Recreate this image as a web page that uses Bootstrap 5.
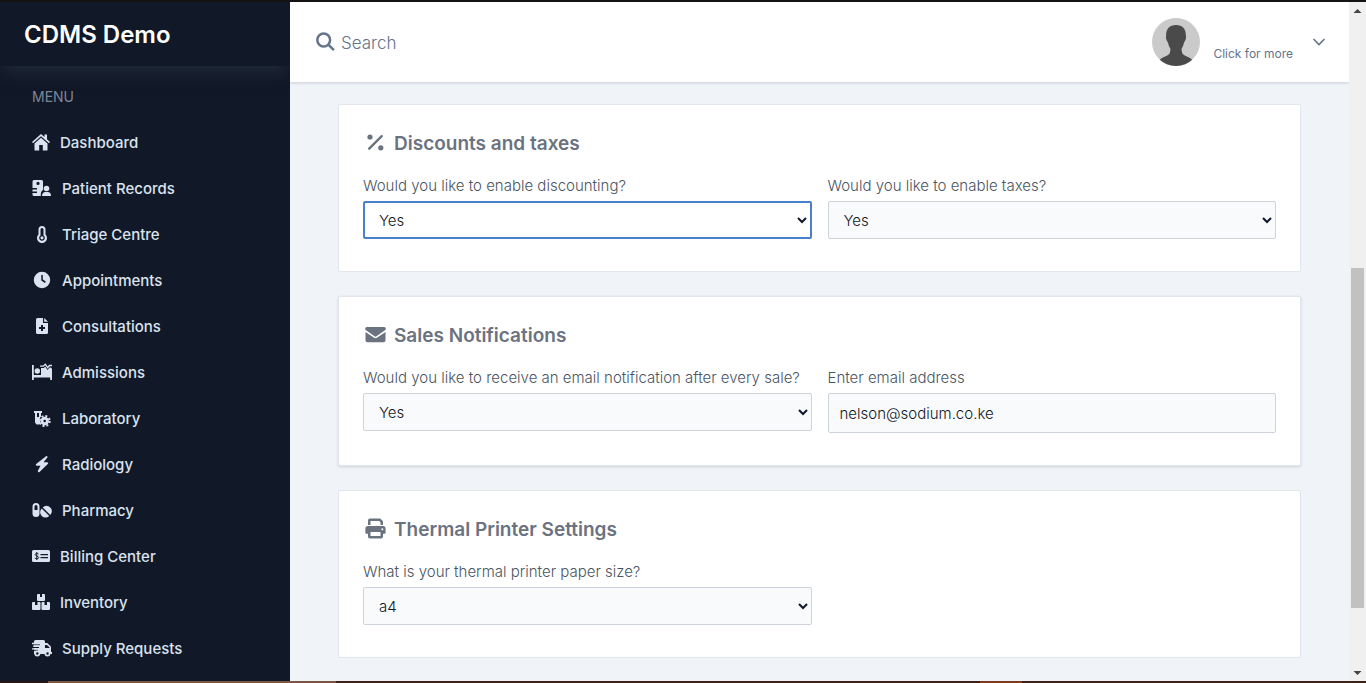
<!DOCTYPE html>
<html lang="en">
<head>
<meta charset="utf-8">
<meta name="viewport" content="width=device-width, initial-scale=1">
<title>CDMS Demo - Settings</title>
<link href="https://cdn.jsdelivr.net/npm/bootstrap@5.3.0/dist/css/bootstrap.min.css" rel="stylesheet">
<style>
  body { font-family: Inter, "Liberation Sans", sans-serif; font-size: 15px; line-height: 24px; color: #4b5563; background: #f0f3f8; }
  .app-shell { border-top: 2px solid #151214; }
  .sidebar { width: 290px; background: #111827; }
  .brand-bar { height: 64px; padding: 2px 0 0 24px; font-size: 24px; font-weight: 600; box-shadow: 0 10px 15px -3px #1f2937; position: relative; }
  .menu-title { font-size: 14px; line-height: 20px; color: #7b8799; margin: 21px 0 13px 32px; }
  .side-link { height: 46px; padding-left: 32px; gap: 10px; color: #dbe3f0; font-weight: 500; text-decoration: none; }
  .side-link:hover { color: #fff; }
  .side-link svg { width: 20px; height: 18px; fill: currentColor; flex: none; margin-bottom: 2px; }
  .side-link.narrow svg { width: 18px; }
  .topbar { height: 80px; padding: 0 23px 0 26px; background: #fff; box-shadow: 0 1px 3px rgba(0, 0, 0, .16); position: relative; color: #64748b; }
  .search-input { border: 0; outline: 0; font-size: 17px; font-weight: 300; color: #64748b; background: transparent; padding: 2px 0 0 5px; }
  .search-input::placeholder { color: #64748b; }
  .user-menu { border: 0; background: transparent; color: #64748b; font-size: 12px; padding: 0; }
  .user-menu .more-text { padding-top: 24px; margin-left: 13px; margin-right: 19px; }
  .content { padding: 22px 48px 0; gap: 24px; }
  .panel { background: #fff; border: 1px solid #e1e6ec; border-radius: 2px; padding: 25px 24px 32px; }
  .panel.raised { box-shadow: 0 1px 3px rgba(0, 0, 0, .14); }
  .panel-title { color: #6b7280; font-size: 19px; line-height: 28px; font-weight: 600; margin: 0 0 16px; padding-left: 2px; gap: 8px; }
  .panel-title svg { width: 21px; height: 21px; fill: currentColor; margin-bottom: 3px; }
  .panel label { font-weight: 300; margin-bottom: 3px; display: block; white-space: nowrap; }
  .field { display: block; width: 100%; height: 38px; border: 1px solid #cfd4dc; border-radius: 2px; background: #f9fafb; color: #111827; font-weight: 300; padding: 0 11px; outline: 0; }
  input.field { height: 40px; }
  .field.active-field { background: #fff; border: 2px solid #4a80cf; padding: 0 10px; }
  .scroll-rail { width: 17px; background: #f0f0f0; flex: none; }
  .scroll-rail svg { width: 17px; height: 17px; fill: #454545; display: block; }
  .scroll-thumb { background: #c1c1c1; margin: 0 2px; }
  .bottom-edge { height: 2px; background: linear-gradient(90deg, #2a1414 48px, #7a5644 48px, #7a5644 336px, #3d2117 336px, #3d2117 980px, #7d3c22 980px, #7d3c22 1022px, #3d2117 1022px); }
</style>
</head>
<body>
<div class="vh-100 d-flex flex-column overflow-hidden">
<div class="app-shell d-flex flex-fill overflow-hidden">
  <nav class="sidebar flex-shrink-0 overflow-hidden" aria-label="Main menu">
    <div class="brand-bar d-flex align-items-center text-white">CDMS Demo</div>
    <div class="menu-title">MENU</div>
    <a class="side-link narrow d-flex align-items-center" href="#"><svg viewBox="0 0 18 18"><path d="M9 1 0 9l1 1.200 8-7 8 7L18 9l-3-2.700V1.500h-2.500v2.500zM9 4.800 2.500 10.500V17.500h4.700v-5.500h3.600v5.500h4.700v-7z"/></svg>Dashboard</a>
    <a class="side-link d-flex align-items-center" href="#"><svg viewBox="0 0 20 18"><path fill-rule="evenodd" d="M2 1h7.500a1.500 1.500 0 0 1 1.500 1.500V11c-1.500 1-2.200 2.500-2.200 4v2H2a1.500 1.500 0 0 1-1.500-1.500v-1.500H5V12.500H.500v-2H5V9H.500V2.500A1.500 1.500 0 0 1 2 1zm4 1.800a1.600 1.600 0 1 0 0 3.200 1.600 1.600 0 0 0 0-3.200z"/><circle cx="14.500" cy="9.500" r="2.800"/><path d="M10 17c0-2.500 1.500-4 3.300-4h2.400c2 0 3.300 1.500 3.300 4z"/></svg>Patient Records</a>
    <a class="side-link d-flex align-items-center" href="#"><svg viewBox="0 0 20 18"><path fill-rule="evenodd" d="M10 1a3.500 3.500 0 0 1 3.500 3.500v5a5 5 0 1 1-7 0v-5A3.500 3.500 0 0 1 10 1zm0 2a1.500 1.500 0 0 0-1.500 1.500v6a2.800 2.800 0 1 0 3 0v-6A1.500 1.500 0 0 0 10 3z"/><circle cx="10" cy="12.800" r="1.600"/></svg>Triage Centre</a>
    <a class="side-link d-flex align-items-center" href="#"><svg viewBox="0 0 20 18"><path fill-rule="evenodd" d="M10 .800a8.200 8.200 0 1 0 0 16.400A8.200 8.200 0 0 0 10 .800zM9.300 4h1.500v4.600l3 2-.9 1.300-3.600-2.500z"/></svg>Appointments</a>
    <a class="side-link d-flex align-items-center" href="#"><svg viewBox="0 0 20 18"><path fill-rule="evenodd" d="M5.500 1H11v5h5v9.500a1.500 1.500 0 0 1-1.500 1.500h-9A1.500 1.500 0 0 1 4 15.500v-13A1.500 1.500 0 0 1 5.500 1zM9 8v2H7v2h2v2h2v-2h2v-2h-2V8z"/><path d="M12.200 1 16 4.800h-3.800z"/></svg>Consultations</a>
    <a class="side-link d-flex align-items-center" href="#"><svg viewBox="0 0 20 18"><path d="M0 2h1.800v10H9V5h2.800l1.300-1.600L15.500 7l2-2.500h.700A2 2 0 0 1 20 6.500V17h-1.800v-2.500H1.800V17H0z"/><circle cx="5.300" cy="8" r="2.700"/><path fill="none" stroke="currentColor" stroke-width="1.300" d="M8 3.200h3.300l2-2 2.300 3.500 1.800-2.200H20"/></svg>Admissions</a>
    <a class="side-link d-flex align-items-center" href="#"><svg viewBox="0 0 20 18"><path fill-rule="evenodd" d="M2 2h8v2H9v3.500L7.700 9.200l.5 5.800-1.700.500A3.200 3.200 0 0 1 3 12.700V4H2zm3 2v4h2V4z"/><path fill="none" stroke="currentColor" stroke-width="2" stroke-dasharray="2 1.930" d="M17.700 12a5 5 0 1 1-10 0 5 5 0 0 1 10 0z"/><path fill-rule="evenodd" d="M12.700 7.700a4.300 4.300 0 1 0 0 8.600 4.300 4.300 0 0 0 0-8.600zm0 3a1.300 1.300 0 1 1 0 2.600 1.300 1.300 0 0 1 0-2.600z"/></svg>Laboratory</a>
    <a class="side-link d-flex align-items-center" href="#"><svg viewBox="0 0 20 18"><path d="M14 1.200 4.200 9a1 1 0 0 0 .6 1.800h3.700L6 15.600a1 1 0 0 0 1.500 1.300L15.800 9a1 1 0 0 0-.6-1.800h-3.700l3.900-4.700A1 1 0 0 0 14 1.200z"/></svg>Radiology</a>
    <a class="side-link d-flex align-items-center" href="#"><svg viewBox="0 0 20 18"><path fill-rule="evenodd" d="M4 2a3.500 3.500 0 0 1 3.500 3.500v7a3.500 3.500 0 0 1-7 0v-7A3.500 3.500 0 0 1 4 2zm0 2a1.500 1.500 0 0 0-1.500 1.500V9h3V5.500A1.500 1.500 0 0 0 4 4z"/><path d="m9.700 7.400 7.600 7.600A5 5 0 0 1 9.700 7.400zm1-1a5 5 0 0 1 7.600 7.600z"/></svg>Pharmacy</a>
    <a class="side-link narrow d-flex align-items-center" href="#"><svg viewBox="0 0 18 18"><path fill-rule="evenodd" d="M1.500 3h15A1.500 1.500 0 0 1 18 4.500v9a1.500 1.500 0 0 1-1.500 1.500h-15A1.500 1.500 0 0 1 0 13.500v-9A1.500 1.500 0 0 1 1.500 3zM8.500 7v1.200H16V7zm0 3v1.200H16V10z"/><path fill="none" stroke="#111827" d="M6.500 7C5.500 6 3.200 6.200 3.200 7.600S6.700 9 6.700 10.600 3.700 12 2.800 11M4.800 5v8"/></svg>Billing Center</a>
    <a class="side-link narrow d-flex align-items-center" href="#"><svg viewBox="0 0 18 18"><path d="M6 1h2v3h2V1h2a1 1 0 0 1 1 1v5a1 1 0 0 1-1 1H6a1 1 0 0 1-1-1V2a1 1 0 0 1 1-1zM1 9h2v3h2.500V9H7.500a1 1 0 0 1 1 1v6a1 1 0 0 1-1 1H1a1 1 0 0 1-1-1v-6a1 1 0 0 1 1-1zM10.500 9h2v3H15V9h2a1 1 0 0 1 1 1v6a1 1 0 0 1-1 1h-6.500a1 1 0 0 1-1-1v-6a1 1 0 0 1 1-1z"/></svg>Inventory</a>
    <a class="side-link d-flex align-items-center" href="#"><svg viewBox="0 0 20 18"><path d="M3.500 1h8A1.500 1.500 0 0 1 13 2.500V4h2.300L19 7.700V13h1v2H2V2.500A1.500 1.500 0 0 1 3.500 1z"/><path fill="#111827" d="M13 6v3h4.500v-.700L14.800 6zM0 5.200h8v1.100H0zM0 8h7v1.100H0zM0 10.700h6v1.100H0z"/><path d="M0 3.800h9v1.400H0zM1 6.400h7.500v1.400H1zM0 9.200h7v1.400H0z"/><g fill="#111827" stroke="currentColor" stroke-width="1.700"><circle cx="5.300" cy="14.500" r="2.100"/><circle cx="15.500" cy="14.500" r="2.100"/></g></svg>Supply Requests</a>
  </nav>

  <div class="flex-fill overflow-hidden">
    <header class="topbar d-flex align-items-center justify-content-between">
      <label class="d-flex align-items-center" aria-label="Search">
        <svg width="20" height="20" viewBox="0 0 20 20" fill="none" stroke="currentColor" stroke-width="2.500"><circle cx="7.700" cy="8" r="6.400"/><path d="m12.300 12.600 5.600 5.600"/></svg>
        <input class="search-input" type="search" placeholder="Search">
      </label>
      <button class="user-menu d-flex align-items-center" type="button">
        <svg width="48" height="48" viewBox="0 0 48 48"><defs><clipPath id="avatarClip"><circle cx="24" cy="24" r="24"/></clipPath></defs><g clip-path="url(#avatarClip)"><path fill="#cacaca" d="M0 0h48v48H0z"/><path fill="#4a4a4a" d="M24 7c6.500 0 10 4 9.800 10 .8 3-.3 6-1.800 7.500-.5 2.500-1.200 4.500-2.400 6 0 3 .4 5 2 6.200C34 38.500 38 39 40.500 42V48h-33v-6C10 39 14 38.500 16.400 36.700c1.600-1.200 2-3.200 2-6.200-1.200-1.500-1.900-3.500-2.400-6-1.500-1.500-2.600-4.500-1.800-7.500C14 11 17.500 7 24 7z"/></g></svg>
        <span class="more-text">Click for more</span>
        <svg width="14" height="10" viewBox="0 0 14 10" fill="none" stroke="currentColor" stroke-width="1.600"><path d="m1.500 2 5.500 5.500L12.500 2"/></svg>
      </button>
    </header>

    <main class="content d-flex flex-column">
      <section class="panel">
        <h2 class="panel-title d-flex align-items-center"><svg viewBox="0 0 21 21"><circle cx="5" cy="5" r="2.600"/><circle cx="15.800" cy="15.800" r="2.600"/><path fill="none" stroke="currentColor" stroke-width="2.400" stroke-linecap="round" d="M16.700 4.200 4.200 16.700"/></svg>Discounts and taxes</h2>
        <div class="row gx-3">
          <div class="col-6"><label for="discounting">Would you like to enable discounting?</label><select id="discounting" class="field active-field"><option>Yes</option><option>No</option></select></div>
          <div class="col-6"><label for="taxes">Would you like to enable taxes?</label><select id="taxes" class="field"><option>Yes</option><option>No</option></select></div>
        </div>
      </section>
      <section class="panel raised">
        <h2 class="panel-title d-flex align-items-center"><svg viewBox="0 0 21 21"><path d="M2 3h17a1.800 1.800 0 0 1 1 3.300l-8.600 6a1.500 1.500 0 0 1-1.800 0L1 6.300A1.800 1.800 0 0 1 2 3zM.500 7.900l8.200 5.700a3 3 0 0 0 3.600 0l8.200-5.700v8.300a2 2 0 0 1-2 2h-16a2 2 0 0 1-2-2z"/></svg>Sales Notifications</h2>
        <div class="row gx-3">
          <div class="col-6"><label for="notify">Would you like to receive an email notification after every sale?</label><select id="notify" class="field"><option>Yes</option><option>No</option></select></div>
          <div class="col-6"><label for="email">Enter email address</label><input id="email" type="email" class="field" value="nelson@sodium.co.ke"></div>
        </div>
      </section>
      <section class="panel">
        <h2 class="panel-title d-flex align-items-center"><svg viewBox="0 0 21 21"><path fill-rule="evenodd" d="M5 .500h10.200l2.800 2.800V7h-2.500V4.200L14.200 3H5.500v4H3V2.500a2 2 0 0 1 2-2zM3 8h15a2.600 2.600 0 0 1 2.600 2.600v4.200a1 1 0 0 1-1 1H18v2.700a2 2 0 0 1-2 2H5a2 2 0 0 1-2-2v-2.700H1.400a1 1 0 0 1-1-1v-4.200A2.600 2.600 0 0 1 3 8zm2.500 6v4h10v-4zM17.300 10.200a1 1 0 1 0 0 2 1 1 0 0 0 0-2z"/></svg>Thermal Printer Settings</h2>
        <div class="row gx-3">
          <div class="col-6"><label for="paper">What is your thermal printer paper size?</label><select id="paper" class="field"><option>a4</option><option>80mm</option></select></div>
        </div>
      </section>
    </main>
  </div>

  <div class="scroll-rail d-flex flex-column" aria-hidden="true">
    <svg viewBox="0 0 17 17"><path d="m8.500 7 4 4h-8z"/></svg>
    <div style="flex-grow:249"></div>
    <div class="scroll-thumb" style="flex-grow:340"></div>
    <div style="flex-grow:56"></div>
    <svg viewBox="0 0 17 17"><path d="m8.500 11-4-4h8z"/></svg>
  </div>
</div>
<div class="bottom-edge flex-shrink-0"></div>
</div>
<script src="https://cdn.jsdelivr.net/npm/bootstrap@5.3.0/dist/js/bootstrap.bundle.min.js"></script>
</body>
</html>
